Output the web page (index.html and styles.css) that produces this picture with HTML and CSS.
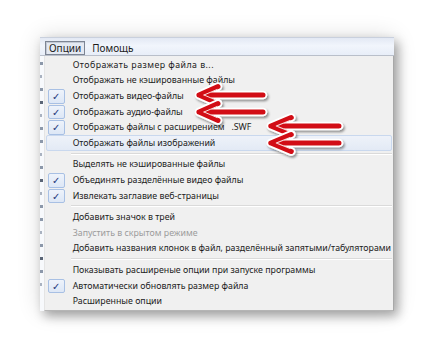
FILE: index.html
```html
<!DOCTYPE html>
<html>
  <head>
    <title>Опции</title>
    <meta charset="utf-8">
    <link rel="stylesheet" href="styles.css">
  </head>
  <body>

    <div class="window">
      <div class="menubar">
        <span class="menubar-item active">Опции</span>
        <span class="menubar-item">Помощь</span>
      </div>

      <div class="window-body">
        <div class="behind">
          <i></i><i class="short"></i><i></i><i class="dark"></i><i class="short"></i><i></i><i></i><i class="short"></i><i></i><i class="dark"></i><i class="short"></i><i></i><i></i><i class="short"></i><i></i><i class="dark"></i><i></i><i class="short"></i>
        </div>

        <div class="dropdown">
          <div class="item wide">Отображать размер файла в...</div>
          <div class="item">Отображать не кэшированные файлы</div>
          <div class="item checked">Отображать видео-файлы</div>
          <div class="item checked">Отображать аудио-файлы</div>
          <div class="item checked">Отображать файлы с расширением&nbsp;&nbsp; .SWF</div>
          <div class="item hover">Отображать файлы изображений</div>
          <div class="separator"></div>
          <div class="item">Выделять не кэшированные файлы</div>
          <div class="item checked">Объединять разделённые видео файлы</div>
          <div class="item checked">Извлекать заглавие веб-страницы</div>
          <div class="separator"></div>
          <div class="item">Добавить значок в трей</div>
          <div class="item disabled">Запустить в скрытом режиме</div>
          <div class="item">Добавить названия клонок в файл, разделённый запятыми/табуляторами</div>
          <div class="separator"></div>
          <div class="item">Показывать расширеные опции при запуске программы</div>
          <div class="item checked">Автоматически обновлять размер файла</div>
          <div class="item">Расширенные опции</div>
        </div>
      </div>
    </div>

    <svg class="arrows" width="434" height="347" viewBox="0 0 434 347">
      <defs>
        <filter id="shade" x="-20%" y="-50%" width="140%" height="200%">
          <feDropShadow dx="1.5" dy="2" stdDeviation="1.3" flood-color="#000" flood-opacity="0.4"/>
        </filter>
        <g id="arrow">
          <path d="M0 0 L64 0 M0 0 L19 -8.5 M0 0 L19 8.5" stroke="#fff" stroke-width="8.5" stroke-linecap="round" stroke-linejoin="round" fill="none"/>
          <path d="M0 0 L64 0 M0 0 L19 -8.5 M0 0 L19 8.5" stroke="#d20e13" stroke-width="5" stroke-linecap="round" stroke-linejoin="round" fill="none"/>
          <path d="M5 0 L18 -5.5 M5 0 L18 5.5" stroke="#fff" stroke-width="1" stroke-linecap="round" fill="none" opacity="0.85"/>
        </g>
      </defs>
      <g filter="url(#shade)">
        <use href="#arrow" x="199" y="95"/>
        <use href="#arrow" x="199" y="112"/>
        <use href="#arrow" transform="translate(271 126) scale(1.06 1)"/>
        <use href="#arrow" transform="translate(271 143) scale(1.06 1)"/>
      </g>
    </svg>

  </body>
</html>
```

FILE: styles.css
```css
html, body {
    height: 100%;
}

body {
    margin: 0;
    position: relative;
    overflow: hidden;

    font-family: "Noto Sans", sans-serif;
    font-size: 8.8px;
    color: #1c1c1c;

    background: #fff;
}

.window {
    width: 354px;
    margin: 37px 0 0 40px;

    display: flex;
    flex-direction: column;

    background: #f0f0f0;
    box-shadow: 4px 5px 10px rgba(0, 0, 0, .32), 0 0 22px rgba(0, 0, 0, .14);
}

.menubar {
    height: 17px;
    padding: 0 0 0 5px;

    display: flex;
    align-items: flex-end;
    gap: 3px;

    border-top: 1px solid #c9d0dd;
    border-bottom: 1px solid #b9bfca;

    background: linear-gradient(to bottom, #e3e9f4, #f1f5fc 45%, #e8eef8);
}

.menubar-item {
    height: 12px;
    padding: 0 3px;

    display: flex;
    align-items: center;

    border: 1px solid transparent;
    font-size: 10px;
    color: #1c1c1c;
}

.menubar-item.active {
    border-color: #7d8594;
    background: #e4e9f2;
    box-shadow: inset 1px 1px 0 #c3c9d4;
}

.window-body {
    display: flex;
}

.behind {
    width: 4px;
    padding-top: 6px;

    display: flex;
    flex-direction: column;
    gap: 10px;
    overflow: hidden;

    background: #f7f9fc;
}

.behind i {
    width: 3px;
    height: 3px;
    background: #8c98aa;
}

.behind i.short {
    width: 2px;
    background: #a9b2c0;
}

.behind i.dark {
    background: #5a6576;
}

.dropdown {
    flex: 1;
    padding: 1px 0;

    display: flex;
    flex-direction: column;

    border-left: 1px solid #e4e4e4;
    border-right: 1px solid #a8a8a8;
    border-bottom: 1px solid #b5b5b5;
}

.item {
    position: relative;
    height: 15.6px;
    padding-left: 26px;
    margin: 0 1px;

    display: flex;
    align-items: center;
    white-space: nowrap;

    border: 1px solid transparent;
    box-sizing: border-box;
}

.item.wide {
    letter-spacing: .45px;
}

.item.checked::before {
    content: "✓";

    position: absolute;
    left: 1px;
    top: 0;
    width: 15px;
    height: 12.6px;

    display: flex;
    justify-content: center;
    align-items: center;

    border: 1px solid #a8c0e4;
    border-radius: 2px;

    font-family: "DejaVu Sans", sans-serif;
    font-size: 10px;
    font-weight: 700;
    color: #22357a;

    background: linear-gradient(to bottom, #eef3fb, #dde7f6);
}

.item.hover {
    border-color: #c9d8ee;
    border-radius: 2px;
    background: linear-gradient(to bottom, #eef2f9, #e3eaf5);
}

.item.disabled {
    color: #9c9c9c;
}

.separator {
    height: 0;
    margin: 2px 1px 2px 26px;

    border-top: 1px solid #dadada;
    border-bottom: 1px solid #fff;
}

.arrows {
    position: absolute;
    left: 0;
    top: 0;
}
```
